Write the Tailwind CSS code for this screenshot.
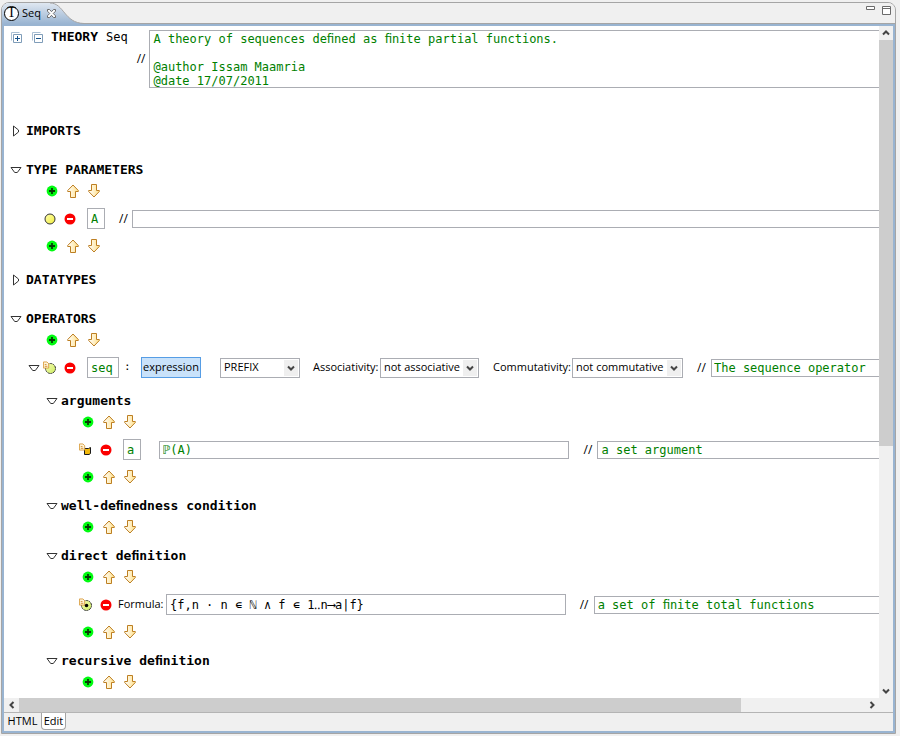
<!DOCTYPE html>
<html lang="en">
<head>
<meta charset="utf-8">
<meta name="viewport" content="width=device-width, initial-scale=1">
<title>Seq</title>
<script src="https://cdn.jsdelivr.net/npm/@tailwindcss/browser@4"></script>
</head>
<body class="h-screen overflow-hidden bg-[#f0f0f0] font-['Open_Sans','Noto_Sans',sans-serif] text-[11px] text-black">
<svg class="absolute size-0" aria-hidden="true">
  <defs>
    <linearGradient id="gold" x1="0" y1="0" x2="1" y2="0"><stop offset="0" stop-color="#fff"/><stop offset="1" stop-color="#ffe08a"/></linearGradient>
    <linearGradient id="yellow" x1="0" y1="0" x2="1" y2="1"><stop offset="0" stop-color="#ffffb0"/><stop offset="1" stop-color="#f2ee3c"/></linearGradient>
    <linearGradient id="lime" x1="0" y1="0" x2="1" y2="1"><stop offset="0" stop-color="#f6fbb0"/><stop offset="1" stop-color="#cdee62"/></linearGradient>
    <linearGradient id="tab" x1="0" y1="0" x2="0" y2="1"><stop offset="0" stop-color="#dfe7f1"/><stop offset="1" stop-color="#99b4d1"/></linearGradient>
  </defs>
  <symbol id="add" viewBox="0 0 16 16"><circle cx="8" cy="8" r="5.4" fill="#00fa10"/><path d="M8 5v6M5 8h6" stroke="#053c05" stroke-width="1.8"/></symbol>
  <symbol id="up" viewBox="0 0 16 16"><path d="M8 2L13.3 7.5V8.5H10.5V14.5H5.5V8.5H2.7V7.5Z" fill="url(#gold)" stroke="#bd7f22" stroke-linejoin="round"/></symbol>
  <symbol id="down" viewBox="0 0 16 16"><path d="M8 14L13.3 8.5V7.5H10.5V1.5H5.5V7.5H2.7V8.5Z" fill="url(#gold)" stroke="#bd7f22" stroke-linejoin="round"/></symbol>
  <symbol id="remove" viewBox="0 0 16 16"><circle cx="8" cy="8" r="5.5" fill="#fb0000"/><path d="M5 8h6" stroke="#fff" stroke-width="2"/></symbol>
  <symbol id="open" viewBox="0 0 12 12"><path d="M1 3.5H11L7.3 8.5H4.7Z" fill="#fff" stroke="#333" stroke-linejoin="round"/></symbol>
  <symbol id="closed" viewBox="0 0 12 12"><path d="M3.5 1V11L8.5 7V5Z" fill="#fff" stroke="#333" stroke-linejoin="round"/></symbol>
  <symbol id="dot" viewBox="0 0 16 16"><circle cx="8" cy="8" r="5" fill="url(#yellow)" stroke="#333"/></symbol>
  <symbol id="green-dot" viewBox="0 0 16 16"><circle cx="8.5" cy="8.5" r="5" fill="url(#lime)" stroke="#333" stroke-dasharray="2.2 .6"/></symbol>
  <symbol id="note" viewBox="0 0 8 8"><path d="M.5.5H4.5L6.5 2.5V7.5H.5Z" fill="#fff4d8" stroke="#d89a3c"/><path d="M2 3.5h2M2 5.5h3" stroke="#d08a28"/></symbol>
  <symbol id="chev" viewBox="0 0 8 8"><path d="M1 2.5L4 5.5L7 2.5" fill="none" stroke="#444" stroke-width="2"/></symbol>
</svg>

<div class="flex h-full flex-col pr-[4px] pb-[2px] pl-[1px] pt-[2px]">
  <div class="flex min-h-0 flex-1 flex-col overflow-hidden rounded-t-lg border border-[#a5a5a5]">
    <header class="flex h-[21px] shrink-0 justify-between border-b border-[#a5a5a5] bg-[#f0f0f0]">
      <div class="relative flex w-[84px] items-center pl-[2px]">
        <svg class="absolute inset-0 h-[21px] w-[84px]" viewBox="0 0 84 21" aria-hidden="true"><path d="M0 21V0H48C62 0 62 20 82 20.5V21Z" fill="url(#tab)"/><path d="M48 0C62 0 62 20 82 20.5" fill="none" stroke="#a5a5a5"/></svg>
        <span class="relative flex size-[15px] items-center justify-center rounded-full border border-black bg-white font-['Liberation_Serif',serif] text-[14px] leading-none">T</span>
        <span class="relative ml-[3px]">Seq</span>
        <button type="button" aria-label="Close Seq" class="relative ml-[5px]">
          <svg class="size-[11px]" viewBox="0 0 11 11"><path d="M1.5 1.5H3.5L5.5 3.7L7.5 1.5H9.5V3.2L7.3 5.5L9.5 7.8V9.5H7.5L5.5 7.3L3.5 9.5H1.5V7.8L3.7 5.5L1.5 3.2Z" fill="#fff" stroke="#6b6b6b"/></svg>
        </button>
      </div>
      <div class="flex gap-[7px] pt-[2px] pr-[4px]">
        <button type="button" aria-label="Minimize" class="h-[11px]"><svg class="h-[11px] w-[9px]" viewBox="0 0 9 11"><path d="M.5 1.5h8v3h-8z" fill="#fff" stroke="#6b6b6b"/></svg></button>
        <button type="button" aria-label="Maximize" class="h-[11px]"><svg class="h-[11px] w-[9px]" viewBox="0 0 9 11"><path d="M.5 1.5h8v8h-8zM.5 3.5h8" fill="#fff" stroke="#6b6b6b"/></svg></button>
      </div>
    </header>

    <div class="flex min-h-0 flex-1 flex-col border-2 border-[#99b4d1]">
      <div class="flex min-h-0 flex-1">
        <main class="min-w-0 flex-1 overflow-hidden bg-white font-['DejaVu_Sans_Mono',monospace] text-[12px] text-[#008000]">
          <div class="flex pt-[4px] pl-[6px] text-black">
            <div class="flex h-[14px] items-center">
              <button type="button" aria-label="Expand all"><svg class="size-[13px]" viewBox="0 0 13 13"><path d="M1.5 9.5V1.5H9.5" fill="none" stroke="#a9bfd4"/><path d="M3.5 3.5h8v8h-8z" fill="#fff" stroke="#7f9db9"/><path d="M5 7.5h5M7.5 5v5" stroke="#15528a"/></svg></button>
              <button type="button" aria-label="Collapse all" class="ml-2"><svg class="size-[13px]" viewBox="0 0 13 13"><path d="M1.5 9.5V1.5H9.5" fill="none" stroke="#a9bfd4"/><path d="M3.5 3.5h8v8h-8z" fill="#fff" stroke="#7f9db9"/><path d="M5 7.5h5" stroke="#15528a"/></svg></button>
            </div>
            <h1 class="ml-[7px] flex h-[14px] gap-[8px] leading-[14px]"><b class="text-[13px]">THEORY</b> Seq</h1>
            <label for="theory-comment" class="ml-[9px] self-center font-['Open_Sans','Noto_Sans',sans-serif] text-[12px]">//</label>
            <textarea id="theory-comment" class="ml-1 h-[58px] min-w-0 flex-1 resize-none overflow-hidden border border-r-0 border-[#abadb3] bg-white px-[3px] pt-[1px] leading-[14px] text-[#008000] outline-none">A theory of sequences deﬁned as ﬁnite partial functions.

@author Issam Maamria
@date 17/07/2011</textarea>
          </div>

          <h2 class="mt-[33px] flex h-5 items-center gap-[4px] pl-[6px] text-[13px] font-bold text-black"><svg class="size-3"><use href="#closed"/></svg>IMPORTS</h2>

          <h2 class="mt-[19px] flex h-5 items-center gap-[4px] pl-[6px] text-[13px] font-bold text-black"><svg class="size-3"><use href="#open"/></svg>TYPE PARAMETERS</h2>
          <div class="flex h-[22px] items-center gap-[5px] pl-[40px]">
            <button type="button" aria-label="Add"><svg class="size-4"><use href="#add"/></svg></button>
            <button type="button" aria-label="Move up"><svg class="size-4"><use href="#up"/></svg></button>
            <button type="button" aria-label="Move down"><svg class="size-4"><use href="#down"/></svg></button>
          </div>
          <div class="flex h-[33px] items-center pl-[38px]">
            <svg class="size-4"><use href="#dot"/></svg>
            <button type="button" aria-label="Remove" class="ml-1"><svg class="size-4"><use href="#remove"/></svg></button>
            <input aria-label="Type parameter" value="A" class="ml-[9px] h-[21px] w-[18px] border border-[#abadb3] px-[3px]">
            <label for="type-comment" class="ml-[14px] w-[13px] font-['Open_Sans','Noto_Sans',sans-serif] text-black">//</label>
            <input id="type-comment" class="h-[18px] min-w-0 flex-1 border border-r-0 border-[#abadb3] px-[3px]">
          </div>
          <div class="flex h-[22px] items-center gap-[5px] pl-[40px]">
            <button type="button" aria-label="Add"><svg class="size-4"><use href="#add"/></svg></button>
            <button type="button" aria-label="Move up"><svg class="size-4"><use href="#up"/></svg></button>
            <button type="button" aria-label="Move down"><svg class="size-4"><use href="#down"/></svg></button>
          </div>

          <h2 class="mt-[13px] flex h-5 items-center gap-[4px] pl-[6px] text-[13px] font-bold text-black"><svg class="size-3"><use href="#closed"/></svg>DATATYPES</h2>

          <h2 class="mt-[19px] flex h-5 items-center gap-[4px] pl-[6px] text-[13px] font-bold text-black"><svg class="size-3"><use href="#open"/></svg>OPERATORS</h2>
          <div class="flex h-[22px] items-center gap-[5px] pl-[40px]">
            <button type="button" aria-label="Add"><svg class="size-4"><use href="#add"/></svg></button>
            <button type="button" aria-label="Move up"><svg class="size-4"><use href="#up"/></svg></button>
            <button type="button" aria-label="Move down"><svg class="size-4"><use href="#down"/></svg></button>
          </div>
          <div class="flex h-[33px] items-center pl-[24px] font-['Open_Sans','Noto_Sans',sans-serif] text-[11px] text-black">
            <svg class="size-3"><use href="#open"/></svg>
            <svg class="ml-[2px] size-4" viewBox="0 0 16 16"><use href="#green-dot" width="16" height="16"/><use href="#note" x="1" y="1" width="7" height="8"/></svg>
            <button type="button" aria-label="Remove" class="ml-1"><svg class="size-4"><use href="#remove"/></svg></button>
            <input aria-label="Operator name" value="seq" class="ml-[9px] h-[21px] w-[32px] border border-[#abadb3] px-[3px] font-['DejaVu_Sans_Mono',monospace] text-[12px] text-[#008000]">
            <span class="ml-[5px] w-[17px] font-['DejaVu_Sans_Mono',monospace]">:</span>
            <button type="button" class="h-[21px] w-[60px] border border-[#569de5] bg-[#c9e2fa]">expression</button>
            <span class="relative ml-[19px] flex w-[80px]">
              <select aria-label="Notation" class="h-5 w-full appearance-none border border-[#abadb3] bg-white pl-[3px]"><option>PREFIX</option></select>
              <span class="pointer-events-none absolute top-[2px] right-[2px] flex h-4 w-[14px] items-center justify-center bg-[#efefef]"><svg class="size-2"><use href="#chev"/></svg></span>
            </span>
            <label for="assoc" class="ml-[13px] w-[67px]">Associativity:</label>
            <span class="relative flex w-[99px]">
              <select id="assoc" class="h-5 w-full appearance-none border border-[#abadb3] bg-white pl-[3px]"><option>not associative</option></select>
              <span class="pointer-events-none absolute top-[2px] right-[2px] flex h-4 w-[14px] items-center justify-center bg-[#efefef]"><svg class="size-2"><use href="#chev"/></svg></span>
            </span>
            <label for="comm" class="ml-[14px] w-[79px]">Commutativity:</label>
            <span class="relative flex w-[111px]">
              <select id="comm" class="h-5 w-full appearance-none border border-[#abadb3] bg-white pl-[3px]"><option>not commutative</option></select>
              <span class="pointer-events-none absolute top-[2px] right-[2px] flex h-4 w-[14px] items-center justify-center bg-[#efefef]"><svg class="size-2"><use href="#chev"/></svg></span>
            </span>
            <label for="op-comment" class="ml-[14px] w-[14px] text-[12px]">//</label>
            <input id="op-comment" value="The sequence operator" class="h-[18px] min-w-0 flex-1 border border-r-0 border-[#abadb3] px-[2px] font-['DejaVu_Sans_Mono',monospace] text-[12px] text-[#008000]">
          </div>

          <h3 class="mt-[7px] flex h-5 items-center gap-[3px] pl-[42px] text-[13px] font-bold text-black"><svg class="size-3"><use href="#open"/></svg>arguments</h3>
          <div class="flex h-[22px] items-center gap-[5px] pl-[76px]">
            <button type="button" aria-label="Add"><svg class="size-4"><use href="#add"/></svg></button>
            <button type="button" aria-label="Move up"><svg class="size-4"><use href="#up"/></svg></button>
            <button type="button" aria-label="Move down"><svg class="size-4"><use href="#down"/></svg></button>
          </div>
          <div class="flex h-[33px] items-center pl-[74px]">
            <svg class="size-4" viewBox="0 0 16 16"><path d="M6.5 6.5H10.5L12.5 5.5V11.5L11 12.5H6.5Z" fill="#f2b90c" stroke="#1a1a1a"/><use href="#note" x="1" y="1" width="7" height="8"/></svg>
            <button type="button" aria-label="Remove" class="ml-1"><svg class="size-4"><use href="#remove"/></svg></button>
            <input aria-label="Argument name" value="a" class="ml-[9px] h-[21px] w-[18px] border border-[#abadb3] px-[3px]">
            <input aria-label="Argument type" value="ℙ(A)" class="ml-[18px] h-[18px] min-w-0 shrink grow-[412] basis-0 border border-[#abadb3] px-[3px]">
            <label for="arg-comment" class="ml-[14px] w-[14px] font-['Open_Sans','Noto_Sans',sans-serif] text-black">//</label>
            <input id="arg-comment" value="a set argument" class="h-[18px] min-w-0 shrink grow-[281] basis-0 border border-r-0 border-[#abadb3] px-[3px]">
          </div>
          <div class="flex h-[22px] items-center gap-[5px] pl-[76px]">
            <button type="button" aria-label="Add"><svg class="size-4"><use href="#add"/></svg></button>
            <button type="button" aria-label="Move up"><svg class="size-4"><use href="#up"/></svg></button>
            <button type="button" aria-label="Move down"><svg class="size-4"><use href="#down"/></svg></button>
          </div>

          <h3 class="mt-[8px] flex h-5 items-center gap-[3px] pl-[42px] text-[13px] font-bold text-black"><svg class="size-3"><use href="#open"/></svg>well-deﬁnedness condition</h3>
          <div class="flex h-[22px] items-center gap-[5px] pl-[76px]">
            <button type="button" aria-label="Add"><svg class="size-4"><use href="#add"/></svg></button>
            <button type="button" aria-label="Move up"><svg class="size-4"><use href="#up"/></svg></button>
            <button type="button" aria-label="Move down"><svg class="size-4"><use href="#down"/></svg></button>
          </div>

          <h3 class="mt-[8px] flex h-5 items-center gap-[3px] pl-[42px] text-[13px] font-bold text-black"><svg class="size-3"><use href="#open"/></svg>direct deﬁnition</h3>
          <div class="flex h-[22px] items-center gap-[5px] pl-[76px]">
            <button type="button" aria-label="Add"><svg class="size-4"><use href="#add"/></svg></button>
            <button type="button" aria-label="Move up"><svg class="size-4"><use href="#up"/></svg></button>
            <button type="button" aria-label="Move down"><svg class="size-4"><use href="#down"/></svg></button>
          </div>
          <div class="flex h-[33px] items-center pl-[74px]">
            <svg class="size-4" viewBox="0 0 16 16"><use href="#green-dot" width="16" height="16"/><circle cx="8.5" cy="8.5" r="1.8"/><use href="#note" x="1" y="1" width="7" height="8"/></svg>
            <button type="button" aria-label="Remove" class="ml-1"><svg class="size-4"><use href="#remove"/></svg></button>
            <label for="formula" class="ml-[4px] w-[48px] font-['Open_Sans','Noto_Sans',sans-serif] text-[11px] text-black">Formula:</label>
            <input id="formula" value="{f,n · n ∊ ℕ ∧ f ∊ 1‥n⟶a|f}" class="h-[21px] min-w-0 shrink grow-[401] basis-0 border border-[#abadb3] px-[3px] text-black">
            <label for="formula-comment" class="ml-[14px] w-[14px] font-['Open_Sans','Noto_Sans',sans-serif] text-black">//</label>
            <input id="formula-comment" value="a set of ﬁnite total functions" class="h-[18px] min-w-0 shrink grow-[285] basis-0 border border-r-0 border-[#abadb3] px-[3px]">
          </div>
          <div class="flex h-[22px] items-center gap-[5px] pl-[76px]">
            <button type="button" aria-label="Add"><svg class="size-4"><use href="#add"/></svg></button>
            <button type="button" aria-label="Move up"><svg class="size-4"><use href="#up"/></svg></button>
            <button type="button" aria-label="Move down"><svg class="size-4"><use href="#down"/></svg></button>
          </div>

          <h3 class="mt-[8px] flex h-5 items-center gap-[3px] pl-[42px] text-[13px] font-bold text-black"><svg class="size-3"><use href="#open"/></svg>recursive deﬁnition</h3>
          <div class="flex h-[22px] items-center gap-[5px] pl-[76px]">
            <button type="button" aria-label="Add"><svg class="size-4"><use href="#add"/></svg></button>
            <button type="button" aria-label="Move up"><svg class="size-4"><use href="#up"/></svg></button>
            <button type="button" aria-label="Move down"><svg class="size-4"><use href="#down"/></svg></button>
          </div>
        </main>
        <div class="flex w-[14px] shrink-0 flex-col bg-[#f0f0f0]">
          <button type="button" aria-label="Scroll up" class="flex h-[14px] items-center justify-center"><svg class="size-2 rotate-180"><use href="#chev"/></svg></button>
          <div class="flex-1"><div class="bg-[#cdcdcd]" style="height:63%"></div></div>
          <button type="button" aria-label="Scroll down" class="flex h-[14px] items-center justify-center"><svg class="size-2"><use href="#chev"/></svg></button>
        </div>
      </div>
      <div class="flex h-[14px] shrink-0 bg-[#f0f0f0] pr-[14px]">
        <button type="button" aria-label="Scroll left" class="flex w-[15px] items-center justify-center"><svg class="size-2 rotate-90"><use href="#chev"/></svg></button>
        <div class="flex-1"><div class="h-full bg-[#cdcdcd]" style="width:85.5%"></div></div>
        <button type="button" aria-label="Scroll right" class="flex w-[15px] items-center justify-center"><svg class="size-2 -rotate-90"><use href="#chev"/></svg></button>
      </div>
      <nav class="flex h-[19px] shrink-0 border-t border-[#b4b4b4] bg-[#f0f0f0]">
        <button type="button" class="flex h-[17px] w-[37px] items-center justify-center">HTML</button>
        <button type="button" class="flex h-[17px] w-[25px] items-center justify-center rounded-b border border-t-0 border-[#a5a5a5] bg-white">Edit</button>
      </nav>
    </div>
  </div>
</div>
</body>
</html>
